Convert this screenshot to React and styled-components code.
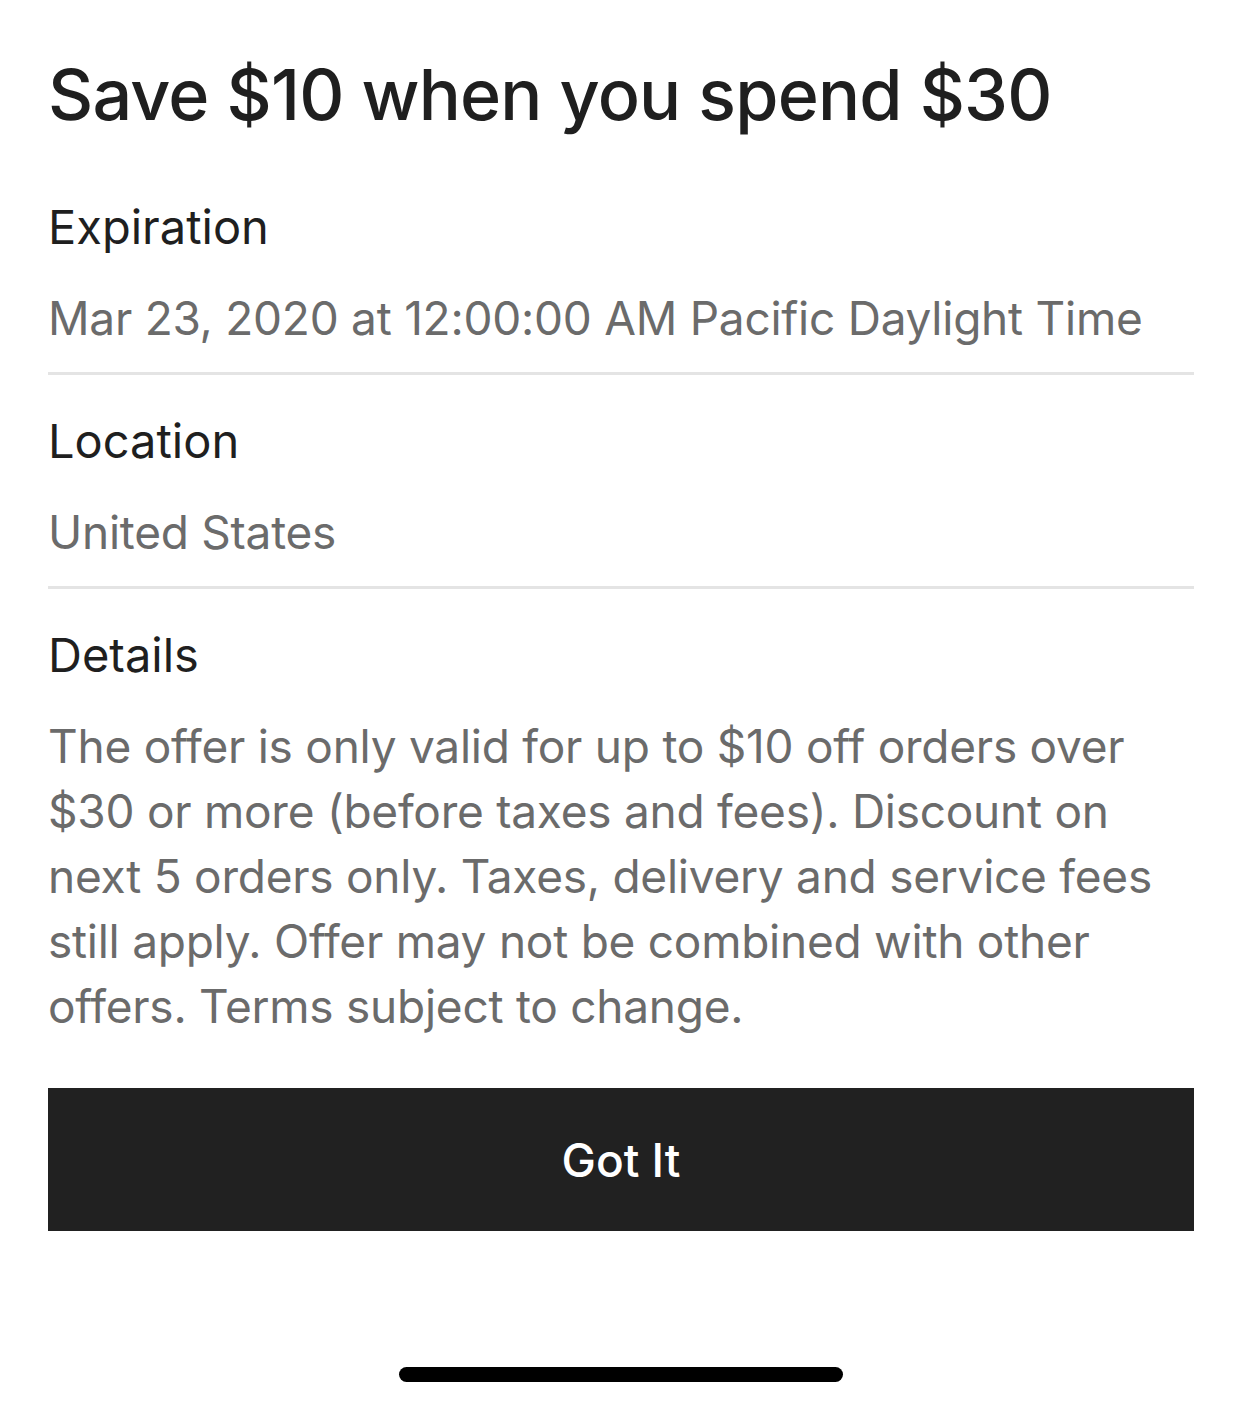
import React from 'react';
import styled, { createGlobalStyle } from 'styled-components';

const GlobalStyle = createGlobalStyle`
  body {
    margin: 0;
    background: #ffffff;
    font-family: Inter, "Noto Sans", "Liberation Sans", sans-serif;
    -webkit-font-smoothing: antialiased;
  }
`;

const Page = styled.div`
  width: 1242px;
  height: 1406px;
  box-sizing: border-box;
  padding: 50px 48px 0;
  display: flex;
  flex-direction: column;
  color: #1f1f1f;
`;

const Title = styled.h1`
  margin: 0 0 21px;
  font-size: 70px;
  line-height: 90px;
  font-weight: 500;
  letter-spacing: -0.8px;
`;

const Section = styled.div`
  padding: 31px 0 ${(p) => (p.$last ? '0' : '22px')};
  border-bottom: ${(p) => (p.$last ? 'none' : '3px solid #e4e4e4')};
`;

const Label = styled.div`
  font-size: 47px;
  line-height: 70px;
  font-weight: 400;
  color: #1f1f1f;
`;

const Value = styled.div`
  margin-top: 24px;
  font-size: 46px;
  line-height: ${(p) => (p.$para ? '65px' : '64px')};
  letter-spacing: -0.25px;
  color: #6b6b6b;
`;

const Button = styled.button`
  margin-top: 49px;
  height: 143px;
  width: 100%;
  border: none;
  background: #212121;
  color: #ffffff;
  font-family: inherit;
  font-size: 46px;
  font-weight: 500;
  cursor: pointer;
`;

const HomeBar = styled.div`
  margin: 136px auto 0;
  width: 444px;
  height: 15px;
  border-radius: 8px;
  background: #000000;
`;

export default function App() {
  return (
    <>
      <GlobalStyle />
      <Page>
        <Title>Save $10 when you spend $30</Title>
        <Section>
          <Label>Expiration</Label>
          <Value>Mar 23, 2020 at 12:00:00 AM Pacific Daylight Time</Value>
        </Section>
        <Section>
          <Label>Location</Label>
          <Value>United States</Value>
        </Section>
        <Section $last>
          <Label>Details</Label>
          <Value $para>
            The offer is only valid for up to $10 off orders over $30 or more
            (before taxes and fees). Discount on next 5 orders only. Taxes,
            delivery and service fees still apply. Offer may not be combined
            with other offers. Terms subject to change.
          </Value>
        </Section>
        <Button>Got It</Button>
        <HomeBar />
      </Page>
    </>
  );
}
